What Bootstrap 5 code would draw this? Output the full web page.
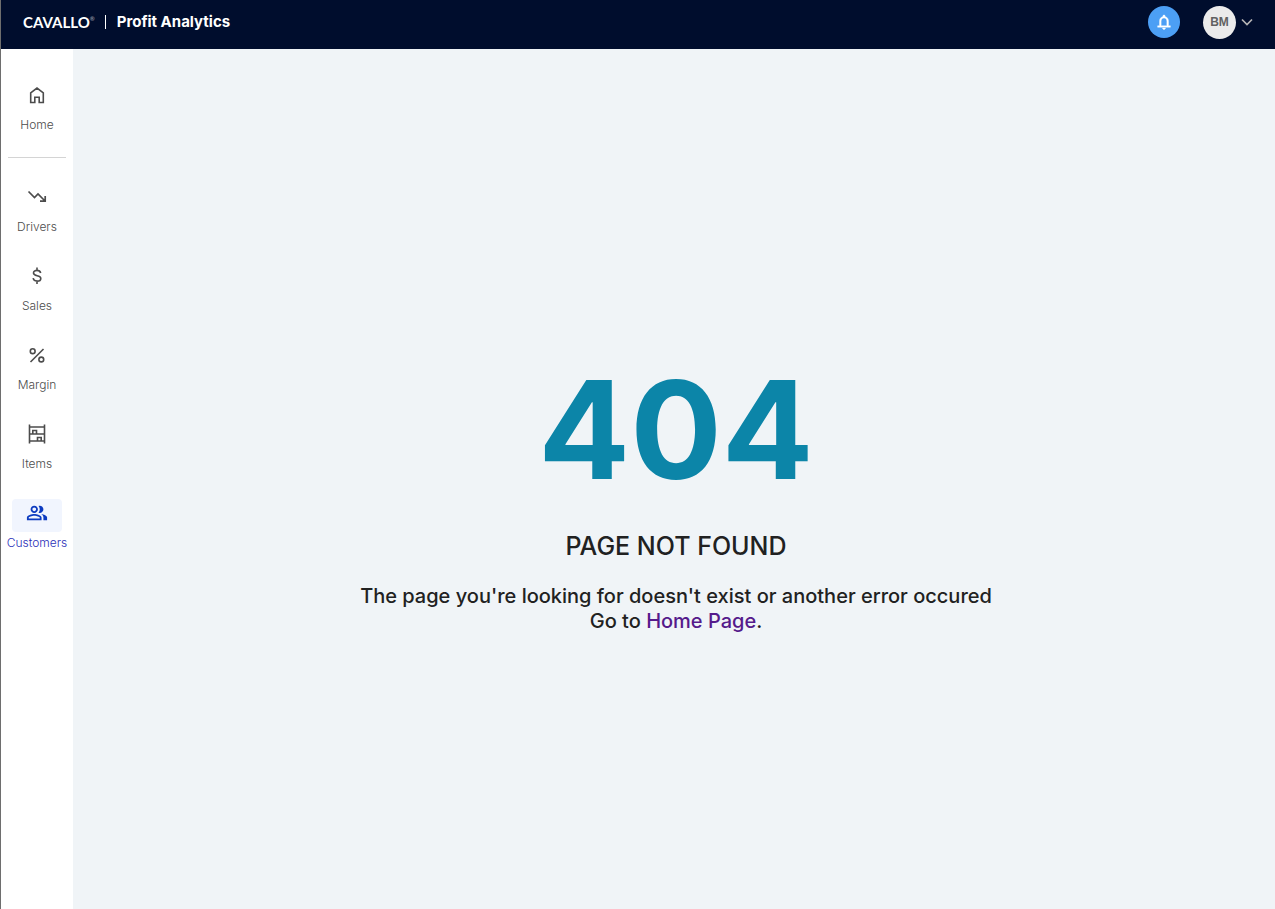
<!DOCTYPE html>
<html lang="en">
<head>
<meta charset="utf-8">
<meta name="viewport" content="width=device-width, initial-scale=1">
<title>Profit Analytics</title>
<link href="https://cdn.jsdelivr.net/npm/bootstrap@5.3.0/dist/css/bootstrap.min.css" rel="stylesheet">
<style>
  body { font-family: Inter, "Liberation Sans", sans-serif; background: #f0f4f7; color: #212121; border-left: 1px solid #6e6e6e; }
  .topbar { height: 49px; background: #000d2d; padding: 0 21px 5px 22px; }
  .brand-logo { font: 700 15px/20px Lato, sans-serif; }
  .brand-logo sup { font-size: 6px; top: -7px; opacity: .5; }
  .brand-rule { width: 1px; height: 14px; background: #fff; margin: 0 11px 0 10px; }
  .brand-name { font-size: 15px; line-height: 20px; font-weight: 700; }
  .bell-btn { width: 32px; height: 32px; background: #4c9ff5; margin-right: 23px; }
  .avatar { width: 33px; height: 33px; background: #ebebeb; color: #616161; font: 700 12px/16px "Liberation Sans", sans-serif; }
  .sidebar { width: 72px; background: #fff; padding-top: 32px; }
  .side-link { color: #4c4c4c; font-size: 12px; line-height: 22px; font-weight: 300; }
  .side-icon { width: 50px; height: 33px; padding-bottom: 5px; }
  .side-link.active { color: #2a2fb8; }
  .side-link.active .side-icon { background: #f1f5fe; color: #0c3bc0; }
  .side-rule { border-top: 1px solid #d4d4d4; margin: 21px 7px 25px; }
  .message { padding: 21px 12px 0 16px; }
  .code { font-size: 136px; line-height: 168px; font-weight: 700; color: #0c85a8; }
  .headline { font-size: 25px; line-height: 32px; font-weight: 500; }
  .detail { font-size: 20px; line-height: 25px; font-weight: 500; margin-top: 22px; }
  .detail a { color: #551a8b; }
</style>
</head>
<body class="min-vh-100 d-flex flex-column">
<header class="topbar d-flex align-items-center justify-content-between text-white">
  <a href="#" class="d-flex align-items-center text-white text-decoration-none">
    <span class="brand-logo">CAVALLO<sup>®</sup></span>
    <span class="brand-rule"></span>
    <span class="brand-name">Profit Analytics</span>
  </a>
  <div class="d-flex align-items-center">
    <button type="button" class="bell-btn btn rounded-circle border-0 p-0 d-flex align-items-center justify-content-center" aria-label="Notifications">
      <svg width="18" height="18" viewBox="0 0 24 24" fill="#fff"><path d="M12 22c1.100 0 2-.9 2-2h-4c0 1.100.9 2 2 2zm6-5v-6c0-3.070-1.630-5.640-4.500-6.320V4c0-.83-.67-1.500-1.500-1.500s-1.500.67-1.500 1.500v.68C7.640 5.360 6 7.920 6 11v6H3.500v2h17v-2h-2.500zm-2.200 0H8.200v-6c0-2.480 1.310-4.300 3.800-4.300s3.800 1.820 3.800 4.300v6z" stroke="#fff" stroke-width=".5"/></svg>
    </button>
    <button type="button" class="btn border-0 p-0 d-flex align-items-center" aria-label="Account menu">
      <span class="avatar rounded-circle d-flex align-items-center justify-content-center">BM</span>
      <svg class="ms-1" width="14" height="14" viewBox="0 0 14 14" fill="none" stroke="#b4b4b4" stroke-width="1.7"><path d="M2 4.500l5 5 5-5"/></svg>
    </button>
  </div>
</header>
<div class="d-flex flex-grow-1">
  <nav class="sidebar flex-shrink-0" aria-label="Main">
    <a href="#" class="side-link d-flex flex-column align-items-center text-decoration-none">
      <span class="side-icon d-flex align-items-center justify-content-center"><svg width="20" height="20" viewBox="0 0 20 20" fill="none" stroke="currentColor" stroke-width="1.600"><path d="M3.700 17.500V7.800L10 3l6.300 4.800v9.700h-4.100v-5.300H7.800v5.300z"/></svg></span>
      <span>Home</span>
    </a>
    <div class="side-rule"></div>
    <div class="d-flex flex-column gap-4">
      <a href="#" class="side-link d-flex flex-column align-items-center text-decoration-none">
        <span class="side-icon d-flex align-items-center justify-content-center"><svg width="20" height="20" viewBox="0 0 20 20" fill="none" stroke="currentColor" stroke-width="1.700"><path d="M1.500 4.500l6 6 3.500-3.500 7 7M18.200 9v5.200H13"/></svg></span>
        <span>Drivers</span>
      </a>
      <a href="#" class="side-link d-flex flex-column align-items-center text-decoration-none">
        <span class="side-icon d-flex align-items-center justify-content-center"><svg width="20" height="20" viewBox="0 0 20 20" fill="none" stroke="currentColor" stroke-width="1.600"><path d="M10 1.500v3M10 15v3M13.700 7C13.200 5.200 12 4.400 10 4.400 7.900 4.400 6.500 5.500 6.500 7c0 3.700 7.300 1.700 7.300 5.400 0 1.600-1.500 2.700-3.700 2.700-2.200 0-3.600-1-4-2.900"/></svg></span>
        <span>Sales</span>
      </a>
      <a href="#" class="side-link d-flex flex-column align-items-center text-decoration-none">
        <span class="side-icon d-flex align-items-center justify-content-center"><svg width="20" height="20" viewBox="0 0 20 20" fill="none" stroke="currentColor" stroke-width="1.600"><circle cx="5.700" cy="6.200" r="2.400"/><circle cx="14.300" cy="14.500" r="2.400"/><path d="M3.500 17L16.500 4"/></svg></span>
        <span>Margin</span>
      </a>
      <a href="#" class="side-link d-flex flex-column align-items-center text-decoration-none">
        <span class="side-icon d-flex align-items-center justify-content-center"><svg width="20" height="20" viewBox="0 0 20 20" fill="none" stroke="currentColor" stroke-width="1.600"><path d="M2.500 .5v19M17.500 .5v19M2.500 3h15M2.500 10h15M2.500 17h15M5.800 10V6.500h3.700V10M10.500 17v-3.500h3.700V17"/></svg></span>
        <span>Items</span>
      </a>
      <a href="#" class="side-link active d-flex flex-column align-items-center text-decoration-none" aria-current="page">
        <span class="side-icon rounded-1 d-flex align-items-center justify-content-center"><svg width="22" height="22" viewBox="0 0 24 24" fill="currentColor"><path d="M16.670 13.130C18.040 14.060 19 15.320 19 17v3h4v-3c0-2.180-3.570-3.470-6.330-3.870zM15 12c2.210 0 4-1.790 4-4s-1.790-4-4-4c-.47 0-.91.1-1.330.24C14.500 5.270 15 6.580 15 8s-.5 2.730-1.330 3.760c.42.14.86.24 1.330.24zM9 12c2.210 0 4-1.790 4-4s-1.790-4-4-4-4 1.790-4 4 1.790 4 4 4zm0-6c1.100 0 2 .9 2 2s-.9 2-2 2-2-.9-2-2 .9-2 2-2zM9 13c-2.670 0-8 1.340-8 4v3h16v-3c0-2.660-5.330-4-8-4zm6 5H3v-.990C3.200 16.290 6.300 15 9 15s5.800 1.290 6 2v1z"/></svg></span>
        <span>Customers</span>
      </a>
    </div>
  </nav>
  <main class="message flex-grow-1 d-flex flex-column align-items-center justify-content-center text-center">
    <h1 class="code m-0">404</h1>
    <h2 class="headline mt-3 mb-0">PAGE NOT FOUND</h2>
    <p class="detail mb-0">The page you're looking for doesn't exist or another error occured<br>Go to <a href="#" class="text-decoration-none">Home Page</a>.</p>
  </main>
</div>
<script src="https://cdn.jsdelivr.net/npm/bootstrap@5.3.0/dist/js/bootstrap.bundle.min.js"></script>
</body>
</html>
